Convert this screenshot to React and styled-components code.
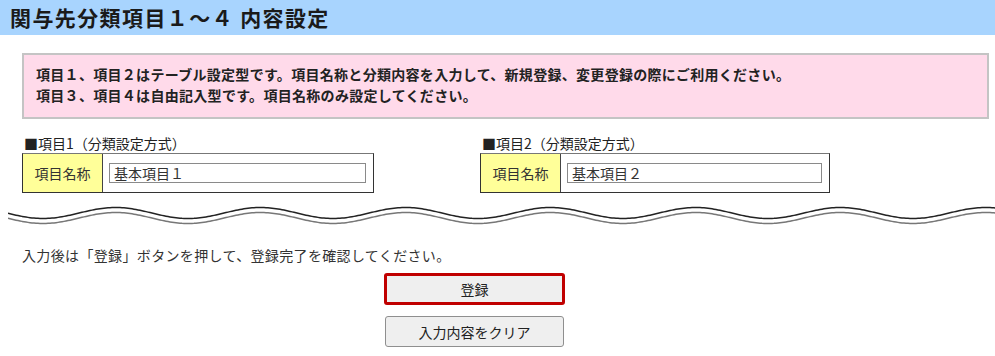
import styled, { createGlobalStyle } from "styled-components";

const GlobalStyle = createGlobalStyle`
    body {
        margin: 0;
        background: #ffffff;
        color: #333333;
        font-family: "Noto Sans CJK JP", "Noto Sans", sans-serif;
    }
`;

const Header = styled.h1`
    margin: 0;
    height: 35px;
    padding-left: 10px;
    background-color: #a8d4fe;
    color: #1a1a1a;
    font-size: 21px;
    font-weight: bold;
    line-height: 34px;
    letter-spacing: 1.4px;
`;
const Content = styled.div`
    padding: 18px 6px 0 22px;
`;
const Notice = styled.div`
    border: 2px solid #c4c4c4;
    background-color: #ffdaea;
    padding: 9px 12px 11px;
    font-size: 14px;
    font-weight: bold;
    line-height: 21px;
    letter-spacing: 0.3px;
    color: #222222;
`;
const Sections = styled.div`
    display: grid;
    grid-template-columns: 458px 1fr;
    margin-top: 15px;
`;
const Label = styled.div`
    font-size: 14px;
    line-height: 18px;
    margin-bottom: 1px;
    padding-left: 2px;
    color: #222222;
`;
const Table = styled.div`
    display: flex;
    width: ${(p) => p.$width}px;
    height: 40px;
    box-sizing: border-box;
    border: 1px solid #333333;
    border-top-color: #777777;
`;
const HeadCell = styled.div`
    width: 79px;
    display: flex;
    align-items: center;
    justify-content: center;
    background-color: #ffff99;
    border-right: 1px solid #444444;
    font-size: 14px;
    color: #333333;
`;
const ValueCell = styled.div`
    flex: 1;
    display: flex;
    align-items: center;
    padding: 0 7px 0 6px;
`;
const Input = styled.input`
    width: 100%;
    height: 20px;
    box-sizing: border-box;
    border: 1px solid #8a8a8a;
    padding: 0 4px;
    font-family: "Noto Sans CJK JP", sans-serif;
    font-size: 14px;
    color: #333333;
    outline: none;
`;
const WaveBox = styled.div`
    margin: 12px 0 0 8px;
    height: 26px;
    svg {
        display: block;
    }
`;
const Guide = styled.div`
    margin-top: 14px;
    padding-left: 22px;
    font-size: 14px;
    line-height: 20px;
    letter-spacing: 0.35px;
    color: #333333;
`;
const Buttons = styled.div`
    display: flex;
    flex-direction: column;
    gap: 11px;
    margin: 8px 0 0 384px;
`;
const Button = styled.button`
    box-sizing: border-box;
    width: ${(p) => (p.$primary ? 181 : 179)}px;
    height: ${(p) => (p.$primary ? 32 : 31)}px;
    margin-left: ${(p) => (p.$primary ? 0 : 1)}px;
    background-color: #efefef;
    border: ${(p) => (p.$primary ? "3px solid #c00000" : "1px solid #8f8f8f")};
    border-radius: 3px;
    font-family: "Noto Sans CJK JP", sans-serif;
    font-size: 14px;
    color: #222222;
    padding: 0;
`;

const wavePath = (offset) => {
    const period = 145;
    const amp = 5.5;
    let d = "";
    for (let x = 0; x <= 990; x += 2) {
        const y = offset + 8 + amp * Math.sin(((x - 35) / period) * Math.PI * 2 - Math.PI / 2) * -1;
        d += (x === 0 ? "M" : "L") + x + " " + y.toFixed(2) + " ";
    }
    return d;
};

const Wave = () => (
    <WaveBox>
        <svg width="990" height="26" viewBox="0 0 990 26">
            <path d={wavePath(0)} fill="none" stroke="#222222" strokeWidth="1.5" />
            <path d={wavePath(5)} fill="none" stroke="#777777" strokeWidth="1.5" />
        </svg>
    </WaveBox>
);

const items = [
    { label: "■項目1（分類設定方式）", value: "基本項目１", width: 352 },
    { label: "■項目2（分類設定方式）", value: "基本項目２", width: 350 },
];

const App = () => {
    return (
        <>
            <GlobalStyle />
            <Header>関与先分類項目１～４ 内容設定</Header>
            <Content>
                <Notice>
                    項目１、項目２はテーブル設定型です。項目名称と分類内容を入力して、新規登録、変更登録の際にご利用ください。
                    <br />
                    項目３、項目４は自由記入型です。項目名称のみ設定してください。
                </Notice>
                <Sections>
                    {items.map((item) => (
                        <div key={item.label}>
                            <Label>{item.label}</Label>
                            <Table $width={item.width}>
                                <HeadCell>項目名称</HeadCell>
                                <ValueCell>
                                    <Input defaultValue={item.value} />
                                </ValueCell>
                            </Table>
                        </div>
                    ))}
                </Sections>
            </Content>
            <Wave />
            <Guide>入力後は「登録」ボタンを押して、登録完了を確認してください。</Guide>
            <Buttons>
                <Button $primary>登録</Button>
                <Button>入力内容をクリア</Button>
            </Buttons>
        </>
    );
};

export default App;
